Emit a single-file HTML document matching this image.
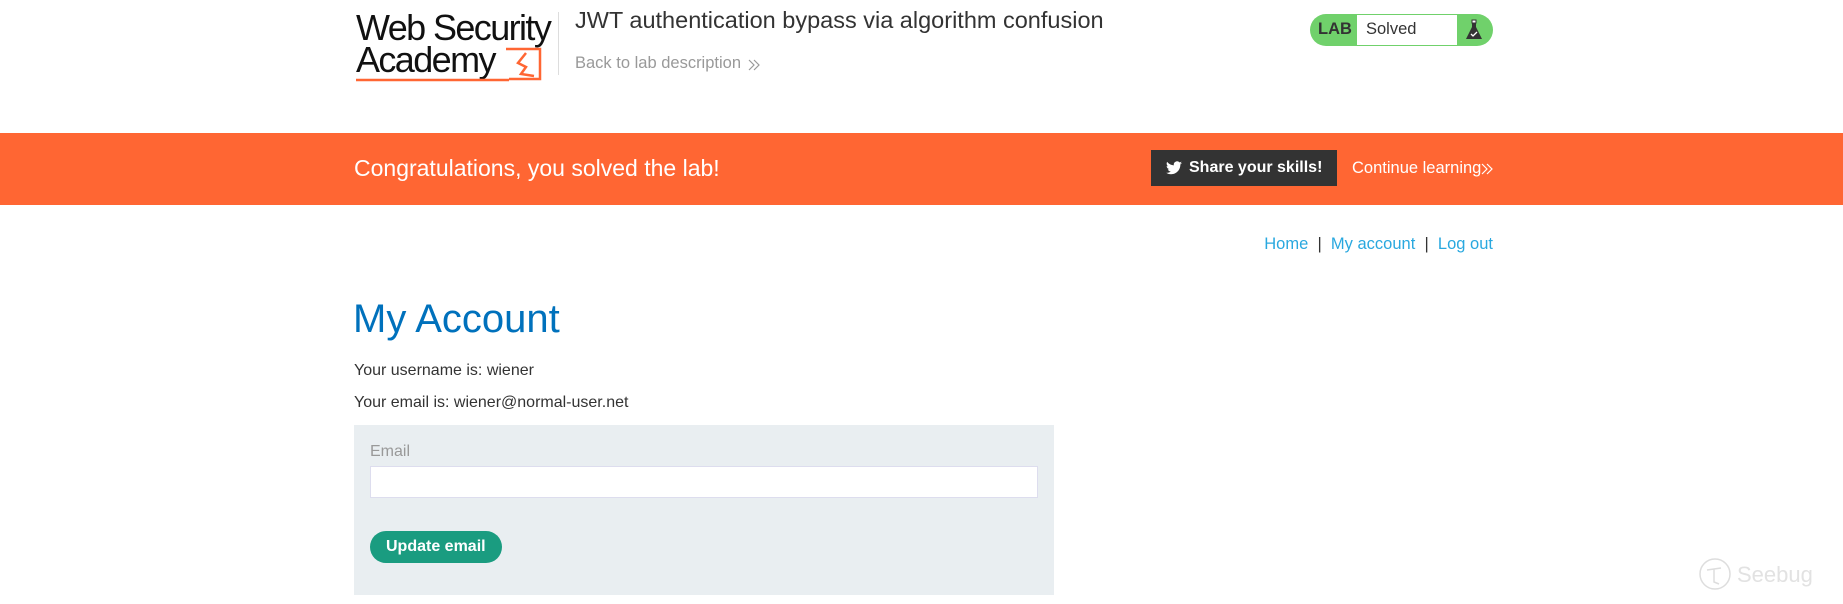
<!DOCTYPE html>
<html><head><meta charset="utf-8"><style>
*{margin:0;padding:0;box-sizing:border-box}
body{width:1843px;height:604px;overflow:hidden;background:#fff;font-family:"Liberation Sans",Arial,sans-serif;position:relative;color:#333}
.a{position:absolute;white-space:nowrap}
</style></head><body>
<!-- logo -->
<div class="a" style="left:356px;top:12px;font-size:36px;letter-spacing:-1.6px;line-height:32px;color:#111;">Web Security<br>Academy</div>
<svg class="a" style="left:354px;top:44px" width="202" height="40" viewBox="0 0 202 40">
<path d="M152 5 H186 V35 H155" fill="none" stroke="#ff6633" stroke-width="2.5"/>
<path d="M155 36 H2" stroke="#ff6633" stroke-width="2.5"/>
<path d="M172 9 L164 19 L172 23 L167 30 L180 32" fill="none" stroke="#ff6633" stroke-width="2.5"/>
</svg>
<div class="a" style="left:558px;top:12px;width:1px;height:63px;background:#ddd"></div>
<div class="a" style="left:575px;top:7px;font-size:23.5px;color:#333">JWT authentication bypass via algorithm confusion</div>
<div class="a" style="left:575px;top:54px;font-size:16.5px;color:#999">Back to lab description</div>
<svg class="a" style="left:747px;top:58px" width="14" height="14" viewBox="0 0 14 14"><path d="M2 2 L7 7 L2 12 M7 2 L12 7 L7 12" fill="none" stroke="#999" stroke-width="1.2"/></svg>
<!-- lab pill -->
<div class="a" style="left:1310px;top:14px;width:183px;height:32px;border-radius:16px;background:#70d16b"></div>
<div class="a" style="left:1318px;top:20px;font-size:16.5px;font-weight:bold;color:#333">LAB</div>
<div class="a" style="left:1357px;top:15px;width:100px;height:30px;background:#fff"></div>
<div class="a" style="left:1366px;top:20px;font-size:16.5px;color:#333">Solved</div>
<svg class="a" style="left:1463px;top:19px" width="22" height="22" viewBox="0 0 22 22"><rect x="9" y="1" width="4" height="3" fill="#fff" stroke="#333"/><path d="M9 4 V8 L3 20 H19 L13 8 V4Z" fill="#333"/><path d="M8 15 L10 17 L14 13" stroke="#fff" fill="none" stroke-width="1.3"/></svg>
<!-- banner -->
<div class="a" style="left:0;top:133px;width:1843px;height:72px;background:#ff6633"></div>
<div class="a" style="left:354px;top:155px;font-size:23px;color:#fff">Congratulations, you solved the lab!</div>
<div class="a" style="left:1151px;top:150px;width:186px;height:36px;background:#333"></div>
<svg class="a" style="left:1166px;top:161px" width="16" height="14" viewBox="0 0 24 20"><path d="M24 2.4a10 10 0 0 1-2.8.8A5 5 0 0 0 23.3.4a10 10 0 0 1-3.1 1.2A4.9 4.9 0 0 0 11.8 6 14 14 0 0 1 1.7.9a4.9 4.9 0 0 0 1.5 6.6A5 5 0 0 1 1 6.9a4.9 4.9 0 0 0 3.9 4.8 5 5 0 0 1-2.2.1 4.9 4.9 0 0 0 4.6 3.4A9.9 9.9 0 0 1 0 17.2 14 14 0 0 0 7.5 19.4c9.1 0 14-7.5 14-14v-.6A10 10 0 0 0 24 2.4z" fill="#fff"/></svg>
<div class="a" style="left:1189px;top:159px;font-size:16px;font-weight:bold;color:#fff">Share your skills!</div>
<div class="a" style="left:1352px;top:159px;font-size:16.5px;color:#fff">Continue learning</div>
<svg class="a" style="left:1480px;top:162px" width="14" height="14" viewBox="0 0 14 14"><path d="M2 2 L7 7 L2 12 M7 2 L12 7 L7 12" fill="none" stroke="#fff" stroke-width="1.2"/></svg>
<!-- nav -->
<div class="a" style="right:350px;top:235px;font-size:16.5px;color:#29a8df">Home &nbsp;<span style="color:#333">|</span>&nbsp; My account &nbsp;<span style="color:#333">|</span>&nbsp; Log out</div>
<div class="a" style="left:353px;top:297px;font-size:40px;color:#0071bc">My Account</div>
<div class="a" style="left:354px;top:362px;font-size:16px;color:#333">Your username is: wiener</div>
<div class="a" style="left:354px;top:394px;font-size:16px;color:#333">Your email is: wiener@normal-user.net</div>
<!-- form -->
<div class="a" style="left:354px;top:425px;width:700px;height:170px;background:#e9eef1"></div>
<div class="a" style="left:370px;top:443px;font-size:16px;color:#999">Email</div>
<div class="a" style="left:370px;top:466px;width:668px;height:32px;background:#fff;border:1px solid #dde"></div>
<div class="a" style="left:370px;top:531px;width:132px;height:32px;border-radius:16px;background:#1a9c80"></div>
<div class="a" style="left:386px;top:538px;font-size:16px;font-weight:bold;color:#fff">Update email</div>
<!-- watermark -->
<svg class="a" style="left:1697px;top:556px" width="36" height="40" viewBox="0 0 36 40"><circle cx="18" cy="18" r="15" fill="none" stroke="#ddd" stroke-width="1.5"/><path d="M10 14 L24 12 M17 13 L17 26 L22 28" fill="none" stroke="#ddd" stroke-width="1.5"/></svg>
<div class="a" style="left:1737px;top:562px;font-size:22px;color:#e2e2e2">Seebug</div>
</body></html>
